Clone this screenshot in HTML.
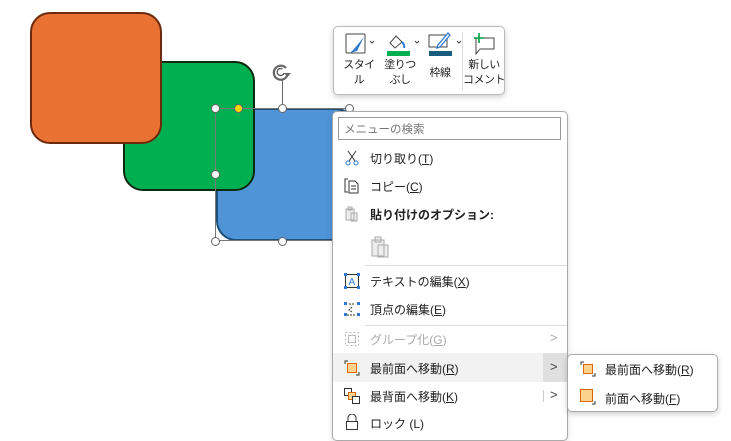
<!DOCTYPE html>
<html><head><meta charset="utf-8"><style>
body{margin:0;width:731px;height:429px;background:#fff;position:relative;overflow:hidden;font-family:"Liberation Sans","Noto Sans CJK JP",sans-serif;font-size:12px;color:#222}
.a{position:absolute}
.h{position:absolute;width:9px;height:9px;border:1.5px solid #666;border-radius:50%;background:#fff;box-sizing:border-box}
.it{position:absolute;left:370px;font-size:12px}
.ic{position:absolute;left:344px}
.tl{position:absolute;text-align:center;font-size:11px;line-height:15px;white-space:nowrap;letter-spacing:-0.5px}
u{text-decoration:underline}
</style></head><body>
<div class="a" style="left:216px;top:108px;width:140px;height:133px;background:#4f94d7;border:2px solid #1e4e79;border-radius:20px;box-sizing:border-box"></div>
<div class="a" style="left:123px;top:61px;width:132px;height:130px;background:#00b050;border:2px solid #0b2a10;border-radius:20px;box-sizing:border-box"></div>
<div class="a" style="left:30px;top:12px;width:132px;height:132px;background:#e97132;border:2px solid #6b2a0c;border-radius:20px;box-sizing:border-box"></div>
<div class="a" style="left:215px;top:108px;width:134px;height:133px;border:1px solid #777;box-sizing:border-box"></div>
<div class="a" style="left:282px;top:80px;width:1px;height:28px;background:#666"></div>
<svg class="a" style="left:272px;top:63px" width="22" height="20" viewBox="0 0 22 20"><path d="M14 5 A7 7 0 1 0 15 13" fill="none" stroke="#666" stroke-width="2.2"/><path d="M10.5 6 A3.5 3.5 0 1 0 12 10" fill="none" stroke="#666" stroke-width="1.5"/><path d="M12 10 L19 10 L15.5 14Z" fill="#666"/></svg>
<div class="h" style="left:211px;top:104px"></div>
<div class="h" style="left:234px;top:104px;background:#ffd800"></div>
<div class="h" style="left:278px;top:104px"></div>
<div class="h" style="left:345px;top:104px"></div>
<div class="h" style="left:211px;top:170px"></div>
<div class="h" style="left:211px;top:237px"></div>
<div class="h" style="left:278px;top:237px"></div>

<!-- toolbar -->
<div class="a" style="left:333px;top:26px;width:172px;height:69px;background:#fff;border:1px solid #bbb;border-radius:5px;box-shadow:0 2px 6px rgba(0,0,0,.2);box-sizing:border-box"></div>
<svg class="a" style="left:345px;top:32px" width="30" height="24"><rect x="1" y="2" width="19" height="19" rx="1" fill="none" stroke="#444"/><path d="M19 5 L9 17 L5 21 L12 19 Z" fill="#2f7ad1"/><path d="M25 9 l2 2 l2-2" fill="none" stroke="#444"/></svg>
<div class="tl" style="left:338px;top:58px;width:42px">スタイ<br>ル</div>
<svg class="a" style="left:386px;top:32px" width="36" height="26"><path d="M10 4 L4 11 L9 16 L16 10 Z" fill="#fff" stroke="#444"/><path d="M16 10 q3 3 2 6" fill="none" stroke="#2f7ad1" stroke-width="2"/><rect x="1" y="19" width="23" height="5" fill="#00b050"/><path d="M29 9 l2 2 l2-2" fill="none" stroke="#444"/></svg>
<div class="tl" style="left:380px;top:58px;width:40px">塗りつ<br>ぶし</div>
<svg class="a" style="left:428px;top:32px" width="36" height="26"><rect x="1" y="3" width="18" height="12" fill="none" stroke="#444"/><path d="M20 1 L10 13 L9 16 L12 15 L22 3Z" fill="#fff" stroke="#2f7ad1" stroke-width="1.3"/><rect x="1" y="19" width="23" height="5" fill="#1a5c7e"/><path d="M29 9 l2 2 l2-2" fill="none" stroke="#444"/></svg>
<div class="tl" style="left:425px;top:66px;width:30px">枠線</div>
<div class="a" style="left:462px;top:32px;width:1px;height:58px;background:#ddd"></div>
<svg class="a" style="left:470px;top:32px" width="28" height="24"><path d="M6 6 H24 V17 H10 L6 22 Z" fill="none" stroke="#444"/><path d="M9 1 V11 M4 6 H14" stroke="#00a040" stroke-width="1.6"/></svg>
<div class="tl" style="left:462px;top:58px;width:44px">新しい<br>コメント</div>

<!-- menu -->
<div class="a" style="left:332px;top:111px;width:236px;height:330px;background:#fff;border:1px solid #aaa;border-radius:5px;box-sizing:border-box;box-shadow:0 2px 6px rgba(0,0,0,.15)"></div>
<div class="a" style="left:338px;top:117px;width:223px;height:23px;border:1px solid #999;box-sizing:border-box;font-size:11.5px;color:#777;padding:3px 5px">メニューの検索</div>
<svg class="ic" style="top:150px" width="16" height="16"><path d="M4 1 L11 11 M12 1 L5 11" stroke="#333" fill="none"/><circle cx="4" cy="13" r="2" fill="none" stroke="#2f7ad1"/><circle cx="12" cy="13" r="2" fill="none" stroke="#2f7ad1"/></svg>
<div class="it" style="top:150px">切り取り(<u>T</u>)</div>
<svg class="ic" style="top:178px" width="16" height="16"><path d="M4 1 H1 V14 H4" fill="none" stroke="#333"/><path d="M5 3 H11 L14 6 V15 H5 Z M7 8 H12 M7 11 H12" fill="none" stroke="#333"/></svg>
<div class="it" style="top:178px">コピー(<u>C</u>)</div>
<svg class="ic" style="top:206px" width="16" height="16"><path d="M2 3 H10 V14 H2Z M4 1 H8 V4 H4Z M7 7 H13 V15 H7Z" fill="#eee" stroke="#aaa"/></svg>
<div class="it" style="top:206px;font-weight:bold">貼り付けのオプション:</div>
<svg class="a" style="left:370px;top:235px" width="22" height="24"><path d="M2 5 H14 V21 H2Z M5 2 H11 V7 H5Z M8 10 H18 V22 H8Z" fill="#eee" stroke="#aaa"/></svg>
<div class="a" style="left:365px;top:265px;width:202px;height:1px;background:#ddd"></div>
<svg class="ic" style="top:273px" width="16" height="16"><rect x="1.5" y="1.5" width="13" height="13" fill="none" stroke="#333"/><text x="4.5" y="12" font-size="10" fill="#2f7ad1" font-family="Liberation Sans">A</text><rect x="0" y="0" width="3" height="3" fill="#2f7ad1"/><rect x="13" y="0" width="3" height="3" fill="#2f7ad1"/><rect x="0" y="13" width="3" height="3" fill="#2f7ad1"/><rect x="13" y="13" width="3" height="3" fill="#2f7ad1"/></svg>
<div class="it" style="top:273px">テキストの編集(<u>X</u>)</div>
<svg class="ic" style="top:301px" width="16" height="16"><path d="M5 3 H11 M3 14 H11 M8 6 L5 9 L8 11" fill="none" stroke="#333" stroke-dasharray="2 1"/><rect x="0" y="1" width="3" height="3" fill="#2f7ad1"/><rect x="13" y="1" width="3" height="3" fill="#2f7ad1"/><rect x="0" y="12" width="3" height="3" fill="#2f7ad1"/><rect x="13" y="12" width="3" height="3" fill="#2f7ad1"/></svg>
<div class="it" style="top:301px">頂点の編集(<u>E</u>)</div>
<div class="a" style="left:365px;top:325px;width:202px;height:1px;background:#ddd"></div>
<svg class="ic" style="top:331px" width="16" height="16"><rect x="1.5" y="1.5" width="13" height="13" fill="none" stroke="#bbb" stroke-dasharray="2 2"/><rect x="4.5" y="4.5" width="7" height="7" fill="none" stroke="#bbb"/></svg>
<div class="it" style="top:331px;color:#aaa">グループ化(<u>G</u>)</div>
<div class="a" style="left:550px;top:330px;color:#aaa;font-size:13px">&gt;</div>
<div class="a" style="left:333px;top:353px;width:234px;height:29px;background:#f2f2f2"></div>
<div class="a" style="left:543px;top:353px;width:24px;height:29px;background:#e0e0e0"></div>
<svg class="ic" style="top:360px" width="16" height="16"><path d="M1 4 V1 H4 M15 12 V15 H12" fill="none" stroke="#333"/><rect x="3.5" y="3.5" width="9" height="9" fill="#fbd38d" stroke="#d96a00"/></svg>
<div class="it" style="top:360px">最前面へ移動(<u>R</u>)</div>
<div class="a" style="left:550px;top:359px;color:#444;font-size:13px">&gt;</div>
<svg class="ic" style="top:388px" width="16" height="16"><rect x="0.5" y="0.5" width="7" height="7" fill="#fff" stroke="#333"/><rect x="4.5" y="4.5" width="7" height="7" fill="#fbd38d" stroke="#d96a00"/><rect x="8.5" y="8.5" width="7" height="7" fill="#fff" stroke="#333"/></svg>
<div class="it" style="top:388px">最背面へ移動(<u>K</u>)</div>
<div class="a" style="left:543px;top:390px;width:1px;height:12px;background:#ccc"></div>
<div class="a" style="left:550px;top:387px;color:#444;font-size:13px">&gt;</div>
<svg class="ic" style="top:414px" width="16" height="16"><path d="M4 7 V4 a4 4 0 0 1 8 0 V7" fill="none" stroke="#333"/><rect x="2.5" y="7.5" width="11" height="8" fill="none" stroke="#333"/></svg>
<div class="it" style="top:415px">ロック (L)</div>

<!-- submenu -->
<div class="a" style="left:567px;top:354px;width:151px;height:58px;background:#fff;border:1px solid #aaa;border-radius:5px;box-sizing:border-box;box-shadow:0 2px 6px rgba(0,0,0,.2)"></div>
<svg class="a" style="left:580px;top:361px" width="16" height="16"><path d="M1 4 V1 H4 M15 12 V15 H12" fill="none" stroke="#333"/><rect x="3.5" y="3.5" width="9" height="9" fill="#fbd38d" stroke="#d96a00"/></svg>
<div class="a" style="left:605px;top:361px">最前面へ移動(<u>R</u>)</div>
<svg class="a" style="left:580px;top:389px" width="16" height="16"><path d="M15 12 V15 H12" fill="none" stroke="#333"/><rect x="0.5" y="0.5" width="12" height="12" fill="#fbd38d" stroke="#d96a00"/></svg>
<div class="a" style="left:605px;top:390px">前面へ移動(<u>F</u>)</div>
</body></html>
